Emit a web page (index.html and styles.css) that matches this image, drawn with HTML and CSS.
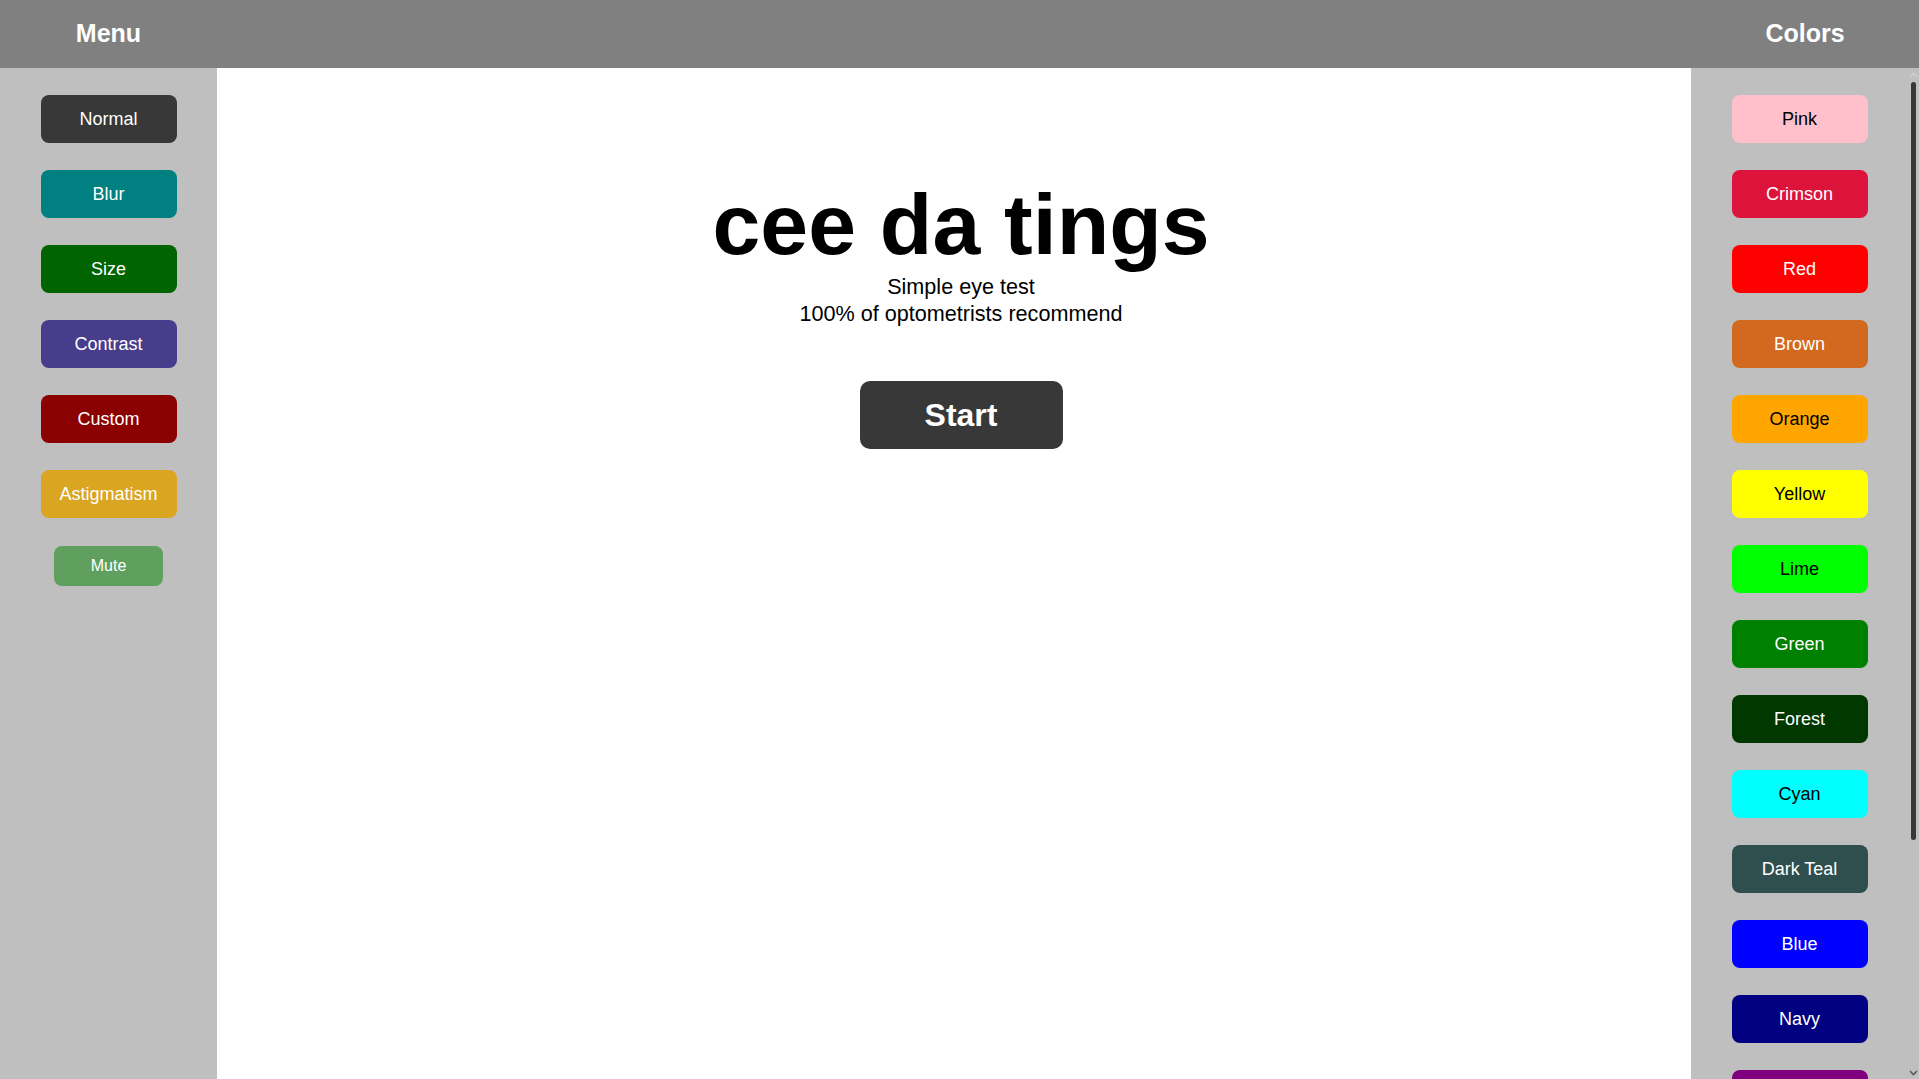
FILE: index.html
```html
<!DOCTYPE html>
<html lang="en">
<head>
<meta charset="utf-8">
<title>cee da tings</title>
<link rel="stylesheet" href="styles.css">
</head>
<body>
<div class="app">
  <header class="topbar">
    <div class="topbar-left">Menu</div>
    <div class="topbar-mid"></div>
    <div class="topbar-right">Colors</div>
  </header>
  <div class="body-row">
    <nav class="sidebar sidebar-left">
      <button class="btn btn-normal">Normal</button>
      <button class="btn btn-blur">Blur</button>
      <button class="btn btn-size">Size</button>
      <button class="btn btn-contrast">Contrast</button>
      <button class="btn btn-custom">Custom</button>
      <button class="btn btn-astig">Astigmatism</button>
      <button class="btn btn-mute">Mute</button>
    </nav>
    <main class="main">
      <h1 class="title">cee da tings</h1>
      <p class="subtitle">Simple eye test<br>100% of optometrists recommend</p>
      <button class="start">Start</button>
    </main>
    <aside class="right-panel">
      <div class="sidebar color-list">
        <button class="btn c-pink">Pink</button>
        <button class="btn c-crimson">Crimson</button>
        <button class="btn c-red">Red</button>
        <button class="btn c-brown">Brown</button>
        <button class="btn c-orange">Orange</button>
        <button class="btn c-yellow">Yellow</button>
        <button class="btn c-lime">Lime</button>
        <button class="btn c-green">Green</button>
        <button class="btn c-forest">Forest</button>
        <button class="btn c-cyan">Cyan</button>
        <button class="btn c-darkteal">Dark Teal</button>
        <button class="btn c-blue">Blue</button>
        <button class="btn c-navy">Navy</button>
        <button class="btn c-purple">Purple</button>
        <button class="btn c-magenta">Magenta</button>
        <button class="btn c-gray">Gray</button>
        <button class="btn c-black">Black</button>
      </div>
      <div class="scrollbar" aria-hidden="true">
        <div class="sb-arrow sb-up">
          <svg width="9" height="6" viewBox="0 0 9 6"><path d="M1 5 L4.5 1.5 L8 5" fill="none" stroke="#d0d0d0" stroke-width="1.6"/></svg>
        </div>
        <div class="sb-track">
          <div class="sb-thumb"></div>
        </div>
        <div class="sb-arrow sb-down">
          <svg width="9" height="6" viewBox="0 0 9 6"><path d="M1 1 L4.5 4.5 L8 1" fill="none" stroke="#5a5a5a" stroke-width="1.6"/></svg>
        </div>
      </div>
    </aside>
  </div>
</div>
</body>
</html>
```
FILE: styles.css
```css
html, body {
  margin: 0;
  padding: 0;
  height: 100%;
  overflow: hidden;
  font-family: "Liberation Sans", Arial, sans-serif;
  background: #ffffff;
}

.app {
  display: flex;
  flex-direction: column;
  height: 100vh;
}

.topbar {
  display: flex;
  height: 68px;
  flex: 0 0 68px;
  background: #808080;
  color: #ffffff;
  font-weight: bold;
  font-size: 25px;
  align-items: center;
}

.topbar-left {
  width: 217px;
  text-align: center;
  padding-bottom: 2px;
}

.topbar-mid {
  flex: 1;
}

.topbar-right {
  width: 228px;
  text-align: center;
  padding-bottom: 2px;
}

.body-row {
  display: flex;
  flex: 1;
  min-height: 0;
}

.sidebar {
  background: #bfbfbf;
  display: flex;
  flex-direction: column;
  align-items: center;
  gap: 27px;
  padding: 27px 0;
  box-sizing: border-box;
}

.sidebar-left {
  width: 217px;
  flex: 0 0 217px;
}

.right-panel {
  width: 228px;
  flex: 0 0 228px;
  display: flex;
  background: #bfbfbf;
  overflow: hidden;
}

.color-list {
  width: 217px;
  flex: 0 0 217px;
  overflow: hidden;
}

.scrollbar {
  width: 11px;
  flex: 0 0 11px;
  display: flex;
  flex-direction: column;
  background: #bfbfbf;
}

.sb-arrow {
  height: 14px;
  flex: 0 0 14px;
  display: flex;
  justify-content: center;
  align-items: center;
}

.sb-down {
  align-items: flex-end;
  padding-bottom: 3px;
  box-sizing: border-box;
}

.sb-track {
  flex: 1;
  display: flex;
  flex-direction: column;
}

.sb-thumb {
  margin-left: 3px;
  width: 5px;
  height: 758px;
  background: #383838;
  border-radius: 3px;
}

.btn {
  flex: 0 0 auto;
  width: 136px;
  height: 48px;
  border: none;
  border-radius: 8px;
  font-family: "Liberation Sans", Arial, sans-serif;
  font-size: 18px;
  color: #ffffff;
  padding: 0;
  margin: 0;
  cursor: pointer;
}

.btn-normal { background: #383838; }
.btn-blur { background: #008080; }
.btn-size { background: #006400; }
.btn-contrast { background: #483d8b; }
.btn-custom { background: #8b0000; }
.btn-astig { background: #daa520; }
.btn-mute {
  background: #5fa05f;
  width: 109px;
  height: 40px;
  font-size: 16px;
  margin-top: 1px;
}

.c-pink { background: #ffc0cb; color: #000000; }
.c-crimson { background: #dc143c; }
.c-red { background: #ff0000; }
.c-brown { background: #d2691e; }
.c-orange { background: #ffa500; color: #000000; }
.c-yellow { background: #ffff00; color: #000000; }
.c-lime { background: #00ff00; color: #000000; }
.c-green { background: #008000; }
.c-forest { background: #003800; }
.c-cyan { background: #00ffff; color: #000000; }
.c-darkteal { background: #2f4f4f; }
.c-blue { background: #0000ff; }
.c-navy { background: #000080; }
.c-purple { background: #800080; }
.c-magenta { background: #ff00ff; }
.c-gray { background: #808080; }
.c-black { background: #000000; }

.main {
  flex: 1;
  display: flex;
  flex-direction: column;
  align-items: center;
  padding: 107px 0 0 14px;
  box-sizing: border-box;
  background: #ffffff;
  color: #000000;
}

.title {
  margin: 0;
  font-size: 86px;
  font-weight: bold;
  line-height: normal;
}

.subtitle {
  margin: 0;
  font-size: 21.6px;
  line-height: 26.5px;
  text-align: center;
}

.start {
  margin-top: 54px;
  width: 203px;
  height: 68px;
  border: none;
  border-radius: 10px;
  background: #383838;
  color: #ffffff;
  font-family: "Liberation Sans", Arial, sans-serif;
  font-size: 32px;
  font-weight: bold;
  padding: 0;
  cursor: pointer;
}
```
